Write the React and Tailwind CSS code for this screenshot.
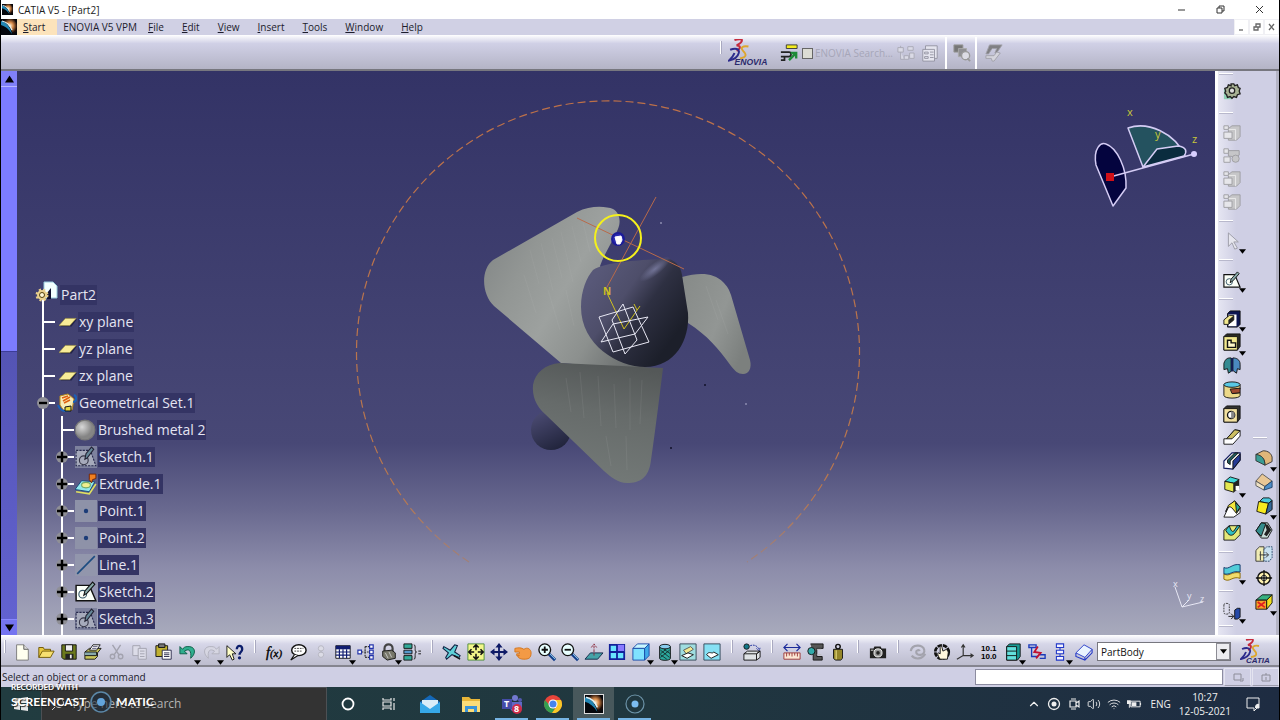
import React from 'react';
import clsx from 'clsx';
import { ChevronUp, Wifi, Volume2 } from 'lucide-react';

const K = '#111';

// All command icons are drawn on a 20x20 grid
const ICONS = {
  new: <><path d="M4 2h8l5 5v12H4z" fill="#fffff0" stroke="#777" /><path d="M12 2v5h5" fill="#ddd" stroke="#555" /></>,
  open: <><path d="M2 16V5h5l1 2h7v3" fill="#e8c840" stroke="#6b5400" /><path d="M2 16l4-7h13l-4 7z" fill="#f7e070" stroke="#6b5400" /></>,
  save: <><path d="M2 2h16v16H4l-2-2z" fill="#6c7a1c" stroke={K} /><path d="M6 2h8v7H6z" fill="#eee" stroke={K} /><path d="M6 12h9v6H6z" fill="#222" /><path d="M11 13h2v4h-2z" fill="#eee" /></>,
  print: <><path d="M1 10l5-4h13l-4 5v4l-3 3H1z" fill="#c9c65a" stroke={K} /><path d="M6 8l4-6h8l-4 6z" fill="#fff" stroke={K} /><path d="M1 10h13v4H1" fill="#8aa" stroke={K} /><path d="M10 4h5M9 6h5" stroke="#557" /></>,
  cut: <g fill="none" stroke="#a2a2ae" strokeWidth="1.5"><path d="M5 2l7 11M14 2L7 13" /><circle cx="5" cy="15" r="2.5" /><circle cx="14" cy="15" r="2.5" /></g>,
  copy: <g fill="#dcdce8" stroke="#a2a2ae"><path d="M2 3h8v11H2z" /><path d="M8 6h9v12H8z" /><path d="M10 9h5M10 12h5M10 15h5" /></g>,
  paste: <><path d="M1 3h13v12H1z" fill="#c0b030" stroke={K} /><path d="M4 1h7v4H4z" fill="#777" stroke={K} /><path d="M8 8h10v10H8z" fill="#fff" stroke="#224" /><path d="M10 11h6M10 13h6M10 15h6" stroke="#224" /></>,
  undo: <path d="M1 4v8h8L6 9c5-3 8-1 7 8 7-6 5-14-4-13-2 0-4 1-5 3z" fill="#2fae8e" stroke="#0a5a44" />,
  redo: <path d="M19 4v8h-8l3-3c-5-3-8-1-7 8C0 11 2 3 11 4c2 0 4 1 5 3z" fill="#d6d6e2" stroke="#b0b0bc" />,
  whatsThis: <><path d="M1 3v13l3-3 3 6 2-1-2-6h4z" fill="#ffffc8" stroke={K} /><path d="M12 7c0-5 6-5 6 0 0 3-3 3-3 6" fill="none" stroke="#0b1d6b" strokeWidth="2.6" /><circle cx="15" cy="16.5" r="1.8" fill="#0b1d6b" /></>,
  formula: <text x="0" y="15" fontSize="16" fontStyle="italic" fontFamily="Liberation Serif, serif" fill="#000" stroke="#000" strokeWidth="0.4">f<tspan fontSize="12">(x)</tspan></text>,
  comment: <><ellipse cx="11" cy="8" rx="8" ry="6" fill="#fff" stroke={K} strokeWidth="1.6" /><path d="M6 13l-4 6 8-5" fill="#fff" stroke={K} strokeWidth="1.3" /><path d="M6 6h10M6 9h9" stroke="#333" strokeDasharray="2 1" /></>,
  lamp: <g fill="#dcdce6" stroke="#b4b4c0"><circle cx="10" cy="6" r="3" /><circle cx="10" cy="13" r="3" /><path d="M10 8v3" /></g>,
  table: <><path d="M2 3h16v14H2z" fill="#fff" stroke={K} /><path d="M2 3h16v4H2z" fill="#101c70" /><path d="M2 10h16M2 13.5h16M6 7v10M10 7v10M14 7v10" stroke="#101c70" strokeWidth="1.3" /></>,
  relations: <g fill="#fff" stroke="#2233aa" strokeWidth="1.3"><path d="M5 10h9M9 4v12M9 4h5M9 16h5" stroke="#333" strokeDasharray="2 1" /><path d="M1 8h4v4H1zM14 2h4v4h-4zM14 8h4v4h-4zM14 14h4v4h-4z" /></g>,
  lock: <><path d="M5 10V6c0-6 9-6 9 0v4" fill="none" stroke="#444" strokeWidth="2.4" /><path d="M3 9l10-1 4 3v6l-9 2-5-4z" fill="#77776a" stroke={K} /><path d="M6 11l3 6M10 10l3 6" stroke="#ccc" /></>,
  equivalent: <><path d="M1 1h9v5H1z" fill="#3a9" stroke={K} /><path d="M1 8h9v4H1z" fill="#59c" stroke={K} /><path d="M1 14h9v5H1z" fill="#3a9" stroke={K} /><path d="M12 2c3 0 0 8 3 8-3 0 0 8-3 8M17 9h3M17 12h3" fill="none" stroke={K} /></>,
  fly: <><path d="M1 4l7 4 5-6 3 1-3 7 6 4-1 2-8-3-6 5-1-2 3-5-6-5z" fill="#5fd0d8" stroke="#124" strokeWidth="1.2" /><path d="M12 14l7 4" stroke={K} strokeWidth="1.5" /></>,
  fitAll: <><path d="M1 1h18v18H1z" fill="#f3f78a" stroke="#4a8a3a" /><path d="M10 2v6M10 12v6M2 10h6M12 10h6M7 5l3-3 3 3M7 15l3 3 3-3M5 7l-3 3 3 3M15 7l3 3-3 3" fill="none" stroke={K} strokeWidth="1.7" /></>,
  pan: <><path d="M10 2v16M2 10h16" stroke="#0e1a66" strokeWidth="2" /><path d="M10 0l4 5H6zM10 20l4-5H6zM0 10l5-4v8zM20 10l-5-4v8z" fill="#0e1a66" /></>,
  rotate: <path d="M1 6c4-1 7-1 10 1 4-3 8 0 8 4 0 6-3 7-8 7-3 0-6-1-7-3l2-1H3v-2h3v-2H1z" fill="#f39a45" stroke="#d3741c" />,
  zoomIn: <><path d="M12 12l7 7" stroke="#123c8a" strokeWidth="3.4" /><path d="M13 12l6 6" stroke="#9fe0f4" /><circle cx="7.5" cy="7.5" r="6.5" fill="#e8ffff" stroke={K} strokeWidth="1.5" /><path d="M4 7.5h7M7.5 4v7" stroke={K} strokeWidth="2" /></>,
  zoomOut: <><path d="M12 12l7 7" stroke="#123c8a" strokeWidth="3.4" /><path d="M13 12l6 6" stroke="#9fe0f4" /><circle cx="7.5" cy="7.5" r="6.5" fill="#e8ffff" stroke={K} strokeWidth="1.5" /><path d="M4 7.5h7" stroke={K} strokeWidth="2" /></>,
  normal: <><path d="M0 18l6-7h14l-6 7z" fill="#45a3a8" stroke="#124" /><path d="M10 14V3M7 5l3-4 3 4" fill="none" stroke="#823" strokeDasharray="3 1" /></>,
  multiView: <><path d="M2 2h16v16H2z" fill="#69e4ff" stroke="#12209a" strokeWidth="2" /><path d="M10 2h8v8h-8z" fill="#8a7aff" /><path d="M10 2v16M2 10h16" stroke="#12209a" strokeWidth="2" /></>,
  isoView: <><path d="M1 6l5-5h13l-5 5z" fill="#c8f6ff" stroke="#1848a8" /><path d="M1 6h13v13H1z" fill="#7fe2ff" stroke="#1848a8" /><path d="M14 6l5-5v13l-5 5z" fill="#3fa8e8" stroke="#1848a8" /></>,
  shading: <><path d="M4 4v13c0 3 12 3 12 0V4" fill="#2ba89c" stroke={K} /><ellipse cx="10" cy="4" rx="6" ry="2.5" fill="#8ce" stroke={K} /><path d="M5 8l10 8M5 13l7 5M9 7l7 5M15 8L5 16M11 7l-6 5" stroke={K} strokeWidth="0.8" /></>,
  hideShow: <><path d="M1 1h18v18H1z" fill="#9fdde0" stroke="#345" /><path d="M5 8l8-4 3 3-8 5z" fill="#f0e890" stroke="#555" /><path d="M3 14l7-3 6 2-7 4z" fill="#fff" stroke={K} /></>,
  swapSpace: <><path d="M1 1h18v18H1z" fill="#86e0f4" stroke="#345" /><path d="M4 13c3-5 6 0 8-3l5 3-8 4z" fill="#fff" stroke={K} /></>,
  animate: <><circle cx="4" cy="4" r="3" fill="#178" stroke={K} /><path d="M8 3c5-2 9 1 10 5M15 6l3 3 1-4" fill="none" stroke="#1a2a9a" strokeDasharray="2 1" /><path d="M1 12l4-3h14l-4 3v7H1zM1 12h14l4-3v7l-4 3" fill="#dfe3e6" stroke={K} /></>,
  measure: <><path d="M1 5h18M5 1L1 5l4 4M15 1l4 4-4 4" fill="none" stroke="#1a2a9a" strokeWidth="1.3" /><path d="M1 11h18v7H1z" fill="#fbe7d4" stroke="#933" /><path d="M4 11v4M7 11v3M10 11v4M13 11v3M16 11v4" stroke="#933" /></>,
  measureItem: <><path d="M5 1h14v5h-7v9h6v4H8v-6" fill="#555" stroke={K} /><circle cx="6" cy="9" r="4" fill="#3aa" stroke={K} /><path d="M12 7h5M12 13h5" stroke="#bbb" /></>,
  inertia: <><circle cx="10" cy="4" r="2.5" fill="none" stroke={K} strokeWidth="1.6" /><path d="M5 7h10v10l-2 2H7l-2-2z" fill="#94862a" stroke={K} /><path d="M8 8v10" stroke="#d8cc70" strokeWidth="1.5" /></>,
  camera: <><path d="M1 6h4l1-2h7l1 2h5v11H1z" fill="#222" /><circle cx="10" cy="11" r="4.5" fill="#999" stroke="#fff" /><circle cx="10" cy="11" r="2" fill="#222" /><path d="M2 8h3" stroke="#eee" /></>,
  update: <g fill="none" stroke="#a3a3ad" strokeWidth="2.4"><path d="M2 9c1-8 14-8 15-1 1 6-9 7-9 2 0-2 3-3 4-1" /><path d="M3 14c4 5 12 4 15-2" /></g>,
  manual: <><circle cx="10" cy="10" r="7.5" fill="none" stroke={K} strokeWidth="3" strokeDasharray="5 1" /><path d="M8 18c-2-3-4-7-2-7l2 1V5c1-2 2-1 2 0l1 4 4-2 2 3-1 8z" fill="#fff7dc" stroke={K} /></>,
  axisSystem: <path d="M8 2v12h11M8 14l-7 4M6 5l2-3 2 3M16 12l3 2-3 2" fill="none" stroke="#333" strokeWidth="1.3" />,
  meanDims: <text fontSize="9" fontWeight="bold" fontFamily="Liberation Sans, Arial, sans-serif"><tspan x="1" y="9">10.1</tspan><tspan x="1" y="18">10.0</tspan></text>,
  table3d: <><path d="M3 4l3-3h12v14l-3 4H3z" fill="#189a94" stroke={K} /><path d="M3 4h11v15H3zM3 9h11M3 14h11" fill="#63e0dc" stroke={K} /></>,
  swapBody: <><path d="M1 2h8v3H1zM4 5v10h7M13 13h6v4h-6" fill="none" stroke="#1a3aba" strokeWidth="1.5" /><path d="M11 4l-4 6 7 1-5 6" fill="none" stroke="#c01030" strokeWidth="2" /></>,
  stack: <g fill="#f2f2ff" stroke="#2238c8" strokeWidth="1.2"><path d="M6 1h8v4H6zM6 8h8v4H6zM6 15h8v4H6zM10 5v3M10 12v3" /></g>,
  body: <><path d="M1 11L10 2l9 5-8 9z" fill="#eaf4ff" stroke="#2238c8" /><path d="M1 11v4l10 4 8-8V7M11 16v3" fill="none" stroke="#2238c8" strokeWidth="1.2" /></>,
  gear: <><path d="M1 18V7h9v11z" fill="#8fd0b4" /><path d="M9 1h3l1 2 3-1 1 3 2 1-1 3 1 3-3 1-1 3-3-1-2 2-2-2-3 1-1-3-2-2 1-2-1-3 3-1 1-3 3 1z" fill="#a8b294" stroke="#222" strokeWidth="1.5" /><circle cx="10" cy="8.5" r="3" fill="#ddd" stroke="#222" strokeWidth="1.4" /></>,
  boolCube: <g fill="#c6c6c8" stroke="#9c9ca0"><path d="M6 5l4-3h9v12l-4 4H6z" /><path d="M6 6h8v12" fill="none" stroke="#eee" /><path d="M1 2h5v4H1zM1 9h9v7H1z" fill="#e6e6ea" /></g>,
  boolCubeCyl: <g fill="#c6c6c8" stroke="#9c9ca0"><path d="M6 4h12v5l-4 2-8-1z" /><circle cx="14" cy="13" r="4" /><path d="M1 2h5v5H1zM1 11h7v6H1z" fill="#e6e6ea" /></g>,
  select: <path d="M6 1v15l4-4 3 7 3-1-4-7h5z" fill="#e6e6ee" stroke="#9a9aa4" />,
  sketch: <><path d="M1 4h12l6 14H1z" fill="#fbfff8" stroke={K} strokeWidth="1.3" /><circle cx="7" cy="12" r="3.5" fill="none" stroke="#356" /><path d="M8 13l1-4 7-8 2 2-7 8z" fill="#8aa" stroke={K} /></>,
  pad: <><path d="M5 4l3-3h11v15l-3 3H5z" fill="#0c1550" stroke={K} /><path d="M6 5h9v13H6z" fill="#fff" /><path d="M1 11l6-5h5v5l-6 5H1z" fill="#f2e88e" stroke={K} /><path d="M6 11l6-5v5l-6 5z" fill="#222" /></>,
  pocket: <><path d="M1 4l3-3h15v14l-3 4H1z" fill="#2a2a24" stroke={K} /><path d="M1 4h15v15H1z" fill="#f2e88e" stroke={K} /><path d="M5 8h4v3h5v5H5z" fill="#fff8c8" stroke={K} strokeWidth="1.6" /></>,
  shaft: <><path d="M1 7c2-6 5-6 8-6v15l-3 2-1-5-4 1z" fill="#348a92" stroke={K} /><path d="M11 1c4 0 8 2 8 7v6l-3-1-1 5-4-3z" fill="#4a8ac0" stroke={K} /><path d="M10 1v15" stroke="#0c1550" strokeWidth="2" /></>,
  groove: <><path d="M1 4v12c0 4 18 4 18 0v-3l-8 1v-4l8-1V4" fill="#ecd888" stroke={K} /><path d="M8 9l11-1v5l-9 1z" fill="#a04a30" stroke={K} /><ellipse cx="10" cy="4" rx="9" ry="3" fill="#59c8e4" stroke={K} /></>,
  hole: <><path d="M1 4l3-3h15v14l-3 4H1z" fill="#333" stroke={K} /><path d="M1 4h15v15H1z" fill="#f2e0a0" stroke={K} /><circle cx="9" cy="11" r="4" fill="#fff" stroke={K} strokeWidth="1.5" /><path d="M9 7a4 4 0 010 8z" fill="#888" /></>,
  rib: <><path d="M1 18V12h3L13 2l6 1v6l-8 9z" fill="#fff" stroke={K} /><path d="M4 12L13 2l6 1-9 9z" fill="#cdbf62" stroke={K} /></>,
  slot: <><path d="M1 18v-8l9-9h9v8l-8 10z" fill="#fff" stroke="#101a5c" strokeWidth="1.3" /><path d="M5 9l8-8h4l-9 9v4L5 12z" fill="#205a5c" stroke={K} /><path d="M11 10l8-8v7l-8 10z" fill="#253a94" stroke={K} /></>,
  solid: <><path d="M2 6l6-5 10 3-6 4z" fill="#3fd8d8" stroke={K} /><path d="M2 6l10 2v10l-10-3z" fill="#e4e850" stroke={K} /><path d="M12 8l6-4v10l-6 4z" fill="#222" /><path d="M14 11h4v5h-4z" fill="#fff" /></>,
  loft: <><path d="M1 19L7 6l6-5 6 7v6l-7 5z" fill="#fff" stroke={K} /><path d="M3 13c2-6 5-7 8-3l4 5 4-6-6-8-7 5z" fill="#f4e83c" stroke={K} /><path d="M14 3l5 5-4 6z" fill="#2aa898" stroke={K} /></>,
  removedLoft: <><path d="M1 19V8l6-5h12v10l-6 6z" fill="#e4e878" stroke={K} /><path d="M3 8l4-5c2 6 3 7 5 6l4-6h3l-5 7c-4 6-8 4-11-2z" fill="#30c0c4" stroke={K} /></>,
  surface: <><path d="M1 12c6 4 8-3 18-1v6c-9-3-11 5-18 1z" fill="#f2dc6c" stroke="#876400" /><path d="M1 5c6 3 9-5 18-3v8c-9-2-11 4-18 2z" fill="#52ccd8" stroke="#136" /></>,
  translate: <><path d="M1 3c0-2 6-2 6 0v9c0 2-6 2-6 0z" fill="none" stroke="#333" strokeDasharray="2 1" /><path d="M6 16h6M9 13l3 3-3 3" fill="none" stroke={K} /><path d="M13 9l3-2h3v10l-3 2h-3z" fill="#2448a8" stroke={K} /></>,
  fillet: <><path d="M1 6l8-4c6 0 9 3 10 7v5l-8 4c0-7-3-10-10-12z" fill="#dfb679" stroke="#333" /><path d="M1 6c7 1 10 5 10 12l-10-5z" fill="#3a9c94" stroke="#333" /></>,
  chamfer: <><path d="M1 9l7-8 11 8-8 6z" fill="#e8c795" stroke="#555" /><path d="M1 9v5l9 5 1-4z" fill="#efe2c4" stroke="#555" /><path d="M11 15l8-6v7l-9 3z" fill="#4d8ec8" stroke="#246" /></>,
  draft: <><path d="M5 5l4-4h7l3 3-4 3z" fill="#4ac8dc" stroke={K} /><path d="M4 5l11 2-3 12-10-3z" fill="#f6ea20" stroke={K} /><path d="M15 7l4-3v10l-7 5z" fill="#356a9a" stroke={K} /></>,
  shell: <><path d="M1 11l6-9h7l5 8-5 9H7z" fill="#c8dcd8" stroke={K} /><path d="M1 11l6-9 5 1-5 14z" fill="#348c8c" stroke={K} /><path d="M11 4h3l4 6-5 7-3-2 3-5z" fill="#222" /></>,
  thickness: <><path d="M1 6l4-4h5v16H1z" fill="#f0ecb4" stroke="#333" /><path d="M10 5l3-3h6v12l-3 4h-6z" fill="#c8e0f0" stroke="#246" strokeDasharray="2 1" /><path d="M5 11h10M6 7v10M12 8l3 3-3 3" fill="none" stroke="#333" /></>,
  thread: <><circle cx="10" cy="10" r="7" fill="#fff2b0" stroke={K} strokeWidth="1.6" /><circle cx="10" cy="10" r="3" fill="#ffe" stroke={K} /><path d="M10 1v18M1 10h18" stroke={K} strokeWidth="1.4" /></>,
  replace: <><path d="M1 8l7-6h11l-6 6z" fill="#38b080" stroke={K} /><path d="M1 8h12v10H1z" fill="#f8a428" stroke={K} /><path d="M13 8l6-6v9l-6 7z" fill="#f0e020" stroke={K} /><path d="M3 10l8 6M11 10l-8 6" stroke="#e02020" strokeWidth="2" /></>,
  locate: <><path d="M7 1h12v4H7z" fill="#f4ec20" stroke="#333" /><path d="M1 9h9c3 0 3 5 0 5H5M1 14h4v4H1" fill="none" stroke="#222" strokeWidth="1.9" /><path d="M10 18l7-7M12 10h6v6" fill="none" stroke="#1f8a38" strokeWidth="2.6" /></>,
  ghostTree: <g fill="#dadae6" stroke="#a8a8b4"><path d="M1 4h6v5H1zM4 9v8h4M8 13h5v4H8zM12 3h6v4h-6zM14 10h5v6h-5zM4 2v2" /></g>,
  ghostForm: <g fill="#e4e4ee" stroke="#9292a0"><path d="M5 2h13v14H5z" /><path d="M2 6h13v13H2zM4 9h4v2H4zM4 14h4v2H4zM10 9h4M10 12h4M10 15h4" /></g>,
  ghostFind: <><path d="M1 1h10v8H1z" fill="#777" stroke="#999" /><path d="M6 5h9v9H6z" fill="#909094" stroke="#aaa" /><circle cx="14" cy="13" r="4.5" fill="#dcdce4" stroke="#999" strokeWidth="1.5" /><path d="M16 16l3 3" stroke="#999" strokeWidth="2" /></>,
  ghostSend: <><path d="M5 1h14l-6 9h-2l2-5H8l-4 6H1z" fill="#808084" stroke="#a0a0a8" /><path d="M1 13h9l3-4 4 1-7 9H8l-1-3H1z" fill="#d4d4dc" stroke="#a0a0a8" /></>,
  geoSet: <><path d="M3 3l8-2 6 5-2 11-8 1L3 12z" fill="#f8ecb8" stroke="#b88a20" /><path d="M5 5l6-2M6 8l7-4M7 10l6-3" stroke="#e06010" strokeWidth="1.6" /><path d="M1 12c2 6 6 7 12 5M16 9c4 0 4-6 1-7" fill="none" stroke="#1a60b8" strokeWidth="2" /><path d="M8 14l6-1v5H8z" fill="#e8d840" stroke={K} /></>,
  ball: <circle cx="10" cy="10" r="9" fill="url(#ballFill)" stroke="#777" />,
  plane: <><path d="M2 15l6-8h12l-6 8z" fill="#222248" /><path d="M0 14l7-8h12l-7 8z" fill="#f8ec98" stroke="#a89838" strokeWidth="0.6" /></>,
  hiddenSketch: <><path d="M0 0h20v20H0z" fill="#7e829e" /><path d="M1 4h13l5 14H1z" fill="#a6aabb" stroke="#26284c" strokeDasharray="2 1" /><circle cx="8" cy="13" r="4" fill="none" stroke="#334" /><path d="M9 12l1-5 5-6 2 2-6 8z" fill="#689" stroke="#223" /></>,
  extrude: <><path d="M0 15l6-8 12 1-5 9z" fill="#8fe8ec" stroke="#147" strokeWidth="0.8" /><path d="M1 17l12 2 6-9" fill="none" stroke="#e0e060" strokeWidth="1.5" /><ellipse cx="10" cy="11" rx="4" ry="2.5" fill="#f0f090" stroke="#7a6" /><path d="M13 6V1h6v4l-3 1-1 3z" fill="#f08020" stroke="#702000" strokeWidth="0.8" /></>,
  hiddenPoint: <><path d="M0 0h20v20H0z" fill="#8e92a8" /><circle cx="10" cy="10" r="2" fill="#1c3c78" /></>,
  hiddenLine: <><path d="M0 0h20v20H0z" fill="#9296ac" /><path d="M2 18L18 2" stroke="#1c4c80" strokeWidth="1.5" /></>,
};

const FILE_TOOLS = [
  ['New', 'new'], ['Open', 'open'], ['Save', 'save'], ['Quick Print', 'print'], ['Cut', 'cut'],
  ['Copy', 'copy'], ['Paste', 'paste'], ['Undo', 'undo', true], ['Redo', 'redo', true], ["What's This?", 'whatsThis'],
];
const KNOWLEDGE_TOOLS = [
  ['Formula', 'formula'], ['Comment', 'comment'], ['Check', 'lamp'], ['Design Table', 'table', true],
  ['Relations', 'relations'], ['Lock', 'lock', true], ['Equivalent Dimensions', 'equivalent'],
];
const VIEW_TOOLS = [
  ['Fly Mode', 'fly'], ['Fit All In', 'fitAll'], ['Pan', 'pan'], ['Rotate', 'rotate'], ['Zoom In', 'zoomIn'],
  ['Zoom Out', 'zoomOut'], ['Normal View', 'normal'], ['Multi View', 'multiView'], ['Isometric View', 'isoView', true],
  ['Shading', 'shading', true], ['Hide/Show', 'hideShow'], ['Swap Visible Space', 'swapSpace'],
];
const MEASURE_TOOLS = [['Measure Between', 'measure'], ['Measure Item', 'measureItem'], ['Measure Inertia', 'inertia']];
const PART_TOOLS = [
  ['Update All', 'update'], ['Manual Update', 'manual'], ['Axis System', 'axisSystem'], ['Mean Dimensions', 'meanDims'],
  ['Create Datum', 'table3d', true], ['Only Current Body', 'swapBody'], ['Catalog', 'stack', true], ['Insert Body', 'body'],
];
const BOOLEAN_TOOLS = [['Assemble', 'boolCube'], ['Add', 'boolCubeCyl'], ['Remove', 'boolCube'], ['Intersect', 'boolCube']];
const SOLID_TOOLS = [
  ['Pad', 'pad', true], ['Pocket', 'pocket', true], ['Shaft', 'shaft'], ['Groove', 'groove'], ['Hole', 'hole'],
  ['Rib', 'rib'], ['Slot', 'slot'], ['Solid Combine', 'solid', true], ['Multi-sections Solid', 'loft'],
  ['Removed Multi-sections Solid', 'removedLoft'],
];
const DRESS_TOOLS = [
  ['Edge Fillet', 'fillet', true], ['Chamfer', 'chamfer'], ['Draft Angle', 'draft', true], ['Shell', 'shell'],
  ['Thickness', 'thickness'], ['Thread/Tap', 'thread'], ['Replace Face', 'replace', true],
];

const PLANES = ['xy plane', 'yz plane', 'zx plane'];
const FEATURES = [
  ['Sketch.1', 'hiddenSketch'], ['Extrude.1', 'extrude'], ['Point.1', 'hiddenPoint'], ['Point.2', 'hiddenPoint'],
  ['Line.1', 'hiddenLine'], ['Sketch.2', 'sketch'], ['Sketch.3', 'hiddenSketch'],
];

function Icon({ name, className = 'w-5 h-5' }) {
  return <svg viewBox="0 0 20 20" className={clsx('shrink-0', className)} aria-hidden="true">{ICONS[name]}</svg>;
}

function Tool({ label, icon, more, className = 'w-[22px] h-[22px]' }) {
  return (
    <button type="button" aria-label={label} title={label} className={clsx('relative flex items-center justify-center shrink-0', className)}>
      <Icon name={icon} className="w-[18px] h-[18px] overflow-visible" />
      {more && (
        <svg viewBox="0 0 6 4" className="absolute -right-[2px] -bottom-[2px] w-[7px] h-[5px]" aria-hidden="true"><path d="M0 0h6L3 4z" fill="#000" /></svg>
      )}
    </button>
  );
}

function ToolGroup({ tools, className }) {
  return (
    <div className={clsx('flex justify-between shrink-0', className)}>
      {tools.map(([label, icon, more]) => <Tool key={label} label={label} icon={icon} more={more} />)}
    </div>
  );
}

function Grip() {
  return (
    <div className="w-[18px] h-6 flex justify-center shrink-0">
      <div className="w-[2px] h-[13px] bg-white border-r border-[#a9a9c0]" />
    </div>
  );
}

// Short white bar between groups of the vertical toolbar
function Bar({ className = 'h-4 pt-[7px]' }) {
  return <div className={className}><div className="w-[14px] h-[2px] bg-white border-b border-[#b8b8cc]" /></div>;
}

function CatiaMark({ className }) {
  return (
    <svg viewBox="0 0 16 16" className={clsx('shrink-0', className)} aria-hidden="true">
      <path d="M0 0h16v16H0z" fill="#05070c" />
      <path d="M4 0h9l3 5v7l-4 3C10 9 7 5 2 2z" fill="url(#markGlow)" />
      <path d="M0 2c5 1 9 5 11 13C8 10 4 7 0 6z" fill="#2286b4" />
      <path d="M1 2c5 1 8 4 10 9" stroke="#dff4fa" strokeWidth="1.2" fill="none" />
    </svg>
  );
}

function DassaultLogo({ label, className }) {
  return (
    <svg viewBox="0 0 39 26" className={clsx('shrink-0', className)} role="img" aria-label={label}>
      <g fill="none" strokeWidth="1.8">
        <path d="M6 1c3-1 7-1 7 0 0 2-3 4-5 5 4 0 4 3 0 5" stroke="#c42a3c" />
        <path d="M2 10c5-2 9-1 8 3-1 4-4 6-9 7 2-2 4-4 5-7" stroke="#2c2a8c" />
        <path d="M19 7c-5-1-8 1-5 4s4 6-3 7" stroke="#dda62c" />
      </g>
      <text x="6" y="24" fontSize="8" fontWeight="bold" fontStyle="italic" fontFamily="Liberation Sans, Arial, sans-serif" fill="#2c2a6c">{label}</text>
    </svg>
  );
}

function TitleBar() {
  return (
    <header className="h-[19px] shrink-0 flex items-center bg-white text-[#222]">
      <CatiaMark className="w-[11px] h-[11px] ml-[1px]" />
      <h1 className="ml-[5px] text-[10px] leading-4">CATIA V5 - [Part2]</h1>
      <div className="ml-auto flex">
        {[['Minimize', 'M1 5h7'], ['Restore', 'M1 3h5v5H1zM3 3V1h5v5H6'], ['Close', 'M1 1l7 7M8 1L1 8']].map(([label, d]) => (
          <button key={label} type="button" aria-label={label} className="w-[39px] h-[19px] flex items-center justify-center">
            <svg viewBox="0 0 9 9" className="w-[9px] h-[9px]"><path d={d} fill="none" stroke="#333" /></svg>
          </button>
        ))}
      </div>
    </header>
  );
}

function MenuBar() {
  return (
    <nav className="h-4 shrink-0 flex items-stretch bg-[#d0d0e4] text-[10px] leading-4 text-[#1c1c2c]">
      <CatiaMark className="w-4 h-4" />
      <button type="button" className="pl-[6px] pr-[12px] bg-[#fce3bb]"><u>S</u>tart</button>
      <button type="button" className="pl-[6px] pr-[2px]">ENOVIA V5 VPM</button>
      {['File', 'Edit', 'View', 'Insert', 'Tools', 'Window', 'Help'].map((m) => (
        <button key={m} type="button" className="px-[9px]"><u>{m[0]}</u>{m.slice(1)}</button>
      ))}
      <div className="ml-auto flex bg-white">
        {[['Minimize part', 'M1 7h4'], ['Restore part', 'M1 4h4v3H1zM3 4V1h4v3H5'], ['Close part', 'M1 1l5 6M6 1L1 7']].map(([label, d]) => (
          <button key={label} type="button" aria-label={label} className="w-[15px] flex items-center justify-center border border-[#f0f0f4]">
            <svg viewBox="0 0 8 8" className="w-2 h-2"><path d={d} fill="none" stroke="#666" strokeWidth="1.3" /></svg>
          </button>
        ))}
      </div>
    </nav>
  );
}

function EnoviaBar() {
  return (
    <div className="h-[36px] shrink-0 flex items-center pt-[2px] bg-linear-to-b from-white via-[#d0d0e6] via-25% to-[#b4b4c6] border-b-2 border-[#77777f]">
      <div className="flex items-center ml-[55%]">
        <div className="w-6 h-6 pl-4 shrink-0"><div className="w-[2px] h-[13px] bg-white border-r border-[#a9a9c0]" /></div>
        <DassaultLogo label="ENOVIA" className="w-[42px] h-[28px]" />
        <Tool label="Locate" icon="locate" className="ml-2 w-[22px] h-[22px]" />
        <label className="ml-[2px] flex items-center gap-[2px] text-[10px] leading-4 text-[#a6a6b8]">
          <input type="checkbox" className="appearance-none w-[11px] h-[11px] bg-[#dcdcd4] border border-[#666]" />
          ENOVIA Search...
        </label>
        <Tool label="Tree search" icon="ghostTree" className="ml-[2px] w-[22px] h-[22px]" />
        <Tool label="Form" icon="ghostForm" className="ml-[2px] w-[22px] h-[22px]" />
        <div className="mx-1 w-[2px] h-[32px] bg-white" />
        <Tool label="Find" icon="ghostFind" />
        <div className="mx-[2px] w-[2px] h-[32px] bg-white" />
        <Tool label="Send" icon="ghostSend" className="ml-1 w-[22px] h-[22px]" />
      </div>
    </div>
  );
}

function ScrollBar() {
  return (
    <div className="w-4 shrink-0 flex flex-col bg-[#5c5cc0]">
      <button type="button" aria-label="Scroll up" className="h-4 bg-[#8080f8] border-b border-[#b8b8ff] flex items-center justify-center">
        <svg viewBox="0 0 10 8" className="w-[9px] h-2"><path d="M5 0l5 8H0z" fill="#000" /></svg>
      </button>
      <div className="h-[47%] bg-[#7c7cff] border-b border-[#3c3c98]" />
      <div className="flex-1 bg-linear-to-b from-[#5454b4] to-[#6262d0]" />
      <button type="button" aria-label="Scroll down" className="h-4 bg-[#7474f0] border-t border-[#8888ff] flex items-center justify-center">
        <svg viewBox="0 0 10 8" className="w-[9px] h-2"><path d="M0 0h10L5 8z" fill="#000" /></svg>
      </button>
    </div>
  );
}

function TreeLabel({ children }) {
  return <span className="ml-[1px] px-[1px] h-5 leading-5 bg-[#343464] whitespace-nowrap">{children}</span>;
}

function Knob({ open, className }) {
  return (
    <button type="button" aria-label={open ? 'Collapse' : 'Expand'} className={clsx('shrink-0 w-3 h-3', className)}>
      <svg viewBox="0 0 12 12" className="w-3 h-3">
        <circle cx="6" cy="6" r="6" fill="#8f8f96" />
        <path d={open ? 'M2 6h8' : 'M1 6h10M6 1v10'} stroke="#000" strokeWidth="2.4" />
      </svg>
    </button>
  );
}

function SpecTree() {
  return (
    <div className="absolute left-[18px] top-[210px] bottom-0 overflow-hidden text-[14px] text-[#e4e4f2]">
      <div className="flex items-center h-[27px]">
        <svg viewBox="0 0 24 27" className="w-6 h-[27px]" aria-hidden="true">
          <path d="M9 1h9l4 4v12H9z" fill="#f4ffff" stroke="#9cd" />
          <path d="M12 12l4-5v11h-4z" fill="#101030" />
          <path d="M8 16v11" stroke="#fff" strokeWidth="2" />
          <circle cx="7" cy="14" r="5" fill="#e8cf8c" stroke="#e8cf8c" strokeWidth="3" strokeDasharray="2 2" />
          <circle cx="7" cy="14" r="2.5" fill="#fff8d8" stroke="#54400c" />
        </svg>
        <TreeLabel>Part2</TreeLabel>
      </div>
      <ul className="ml-[7px] border-l-2 border-white">
        {PLANES.map((p) => (
          <li key={p} className="flex items-center h-[27px]">
            <span className="w-[11px] h-[2px] bg-white" />
            <Icon name="plane" className="w-[18px] h-[18px] ml-1" />
            <TreeLabel>{p}</TreeLabel>
          </li>
        ))}
        <li>
          <div className="flex items-center h-[27px]">
            <Knob open className="-ml-[7px]" />
            <span className="w-[6px] h-[2px] bg-white" />
            <Icon name="geoSet" className="w-5 h-5 ml-[2px]" />
            <TreeLabel>Geometrical Set.1</TreeLabel>
          </div>
          <ul className="ml-[17px] border-l-2 border-white pb-3">
            <li className="flex items-center h-[27px]">
              <span className="w-[11px] h-[2px] bg-white" />
              <Icon name="ball" className="w-[22px] h-[22px]" />
              <TreeLabel>Brushed metal 2</TreeLabel>
            </li>
            {FEATURES.map(([name, icon]) => (
              <li key={name} className="flex items-center h-[27px]">
                <Knob className="-ml-[7px]" />
                <span className="w-[6px] h-[2px] bg-white" />
                <Icon name={icon} className="w-[22px] h-[22px] ml-[1px]" />
                <TreeLabel>{name}</TreeLabel>
              </li>
            ))}
          </ul>
        </li>
      </ul>
    </div>
  );
}

function Model() {
  return (
    <svg viewBox="17 71 1198 564" className="absolute inset-0 w-full h-full" role="img" aria-label="Propeller model">
      <defs>
        <linearGradient id="bladeA" x1="0" y1="0.2" x2="1" y2="0.8">
          <stop offset="0" stopColor="#828686" /><stop offset="0.25" stopColor="#929694" /><stop offset="0.5" stopColor="#9da19f" /><stop offset="0.75" stopColor="#8c908e" /><stop offset="1" stopColor="#6a6e6e" />
        </linearGradient>
        <linearGradient id="bladeB" x1="0.6" y1="0" x2="0.4" y2="1">
          <stop offset="0" stopColor="#545858" /><stop offset="0.4" stopColor="#666b6a" /><stop offset="1" stopColor="#747a78" />
        </linearGradient>
        <linearGradient id="bladeC" x1="0" y1="0" x2="1" y2="0.6">
          <stop offset="0" stopColor="#868a88" /><stop offset="0.6" stopColor="#929694" /><stop offset="1" stopColor="#7c807e" />
        </linearGradient>
        <linearGradient id="hub" x1="0.1" y1="0.2" x2="0.85" y2="0.75">
          <stop offset="0" stopColor="#585878" /><stop offset="0.35" stopColor="#4e4e6a" /><stop offset="0.6" stopColor="#2e3042" /><stop offset="1" stopColor="#1c1f2a" />
        </linearGradient>
        <radialGradient id="nose"><stop offset="0" stopColor="#8688b0" stopOpacity="0.7" /><stop offset="1" stopColor="#8688b0" stopOpacity="0" /></radialGradient>
        <linearGradient id="knob" x1="0.2" y1="0" x2="0.7" y2="1">
          <stop offset="0" stopColor="#4c4c74" /><stop offset="1" stopColor="#20233a" />
        </linearGradient>
        <linearGradient id="orbit" x1="0" y1="0" x2="0" y2="1">
          <stop offset="0" stopColor="#bd7048" /><stop offset="0.85" stopColor="#b8774e" /><stop offset="1" stopColor="#a08078" />
        </linearGradient>
        <radialGradient id="ballFill" cx="0.35" cy="0.35"><stop offset="0" stopColor="#d8d8d8" /><stop offset="1" stopColor="#858585" /></radialGradient>
        <radialGradient id="markGlow" cx="0.5" cy="0.45"><stop offset="0" stopColor="#fff4d8" /><stop offset="0.45" stopColor="#d88a48" /><stop offset="1" stopColor="#1a0c08" /></radialGradient>
      </defs>

      <path d="M469 562A251.5 251.5 0 1 1 747 562" fill="none" stroke="url(#orbit)" strokeWidth="1.2" strokeDasharray="8 4" />

      <circle cx="551" cy="430" r="20" fill="url(#knob)" />
      <path d="M493 260L577 212C590 205 606 206 613 209C620 213 621 222 618 229C612 243 604 254 600 266L645 370L561 363L494 306C482 295 480 270 493 260Z" fill="url(#bladeA)" />
      <path d="M682 277C700 272 714 273 723 282C727 286 729 289 731 295L750 360C752 368 749 374 743 374C738 374 735 371 731 366C718 348 708 336 688 323Z" fill="url(#bladeC)" />
      <path d="M560 363L663 368C660 392 656 425 651 460C649 478 640 483 627 483C618 483 611 477 604 471L545 414C536 406 532 396 533 385C535 373 545 364 560 363Z" fill="url(#bladeB)" />
      {/* brushed metal grain */}
      <g fill="none" stroke="#c4c8c4" strokeOpacity="0.1">
        <path d="M530 250l9 34M541 243l12 48M552 238l10 40M561 232l12 50M572 226l9 36M583 222l7 30M524 275l12 38M548 290l12 40M566 290l8 36M706 286l12 34M716 300l12 34" />
        <path d="M566 378l5 34M580 372l4 46M598 376l3 50M614 384l2 44M630 378v52M642 380l-2 44M606 436l5 30M626 436l1 34" />
      </g>
      <path d="M593 270C605 262 640 260 660 259C672 256 681 265 682 275L688 313C690 340 675 367 645 367C618 367 581 345 581 307C581 290 587 277 593 270Z" fill="url(#hub)" />
      <ellipse cx="655" cy="269" rx="19" ry="6" transform="rotate(-38 655 269)" fill="url(#nose)" />

      <g fill="none">
        <path d="M656 197L607 287M577 218L684 269" stroke="#b86a4a" />
        <path d="M607 293L624 329L640 306M634 304l3 6" stroke="#cfc020" />
        <g stroke="#e8e8f4">
          <path d="M599 317L633 307L649 342L613 352Z" />
          <path d="M623 304L612 320L625 354L637 340Z" />
          <path d="M648 317L613 324L601 342L635 334Z" />
        </g>
        <circle cx="618" cy="238" r="23" stroke="#f4f01c" strokeWidth="2" />
        <circle cx="618" cy="239" r="6" stroke="#1c1c98" strokeWidth="2" fill="#2a2ab0" />
      </g>
      <path d="M615 237l6-1 1 4-2 4h-3z" fill="#fff" stroke="#fff" />
      <text x="603" y="295" fontSize="10" fontWeight="bold" fill="#cfc020">N</text>
      <g fill="#101028"><circle cx="705" cy="385" r="1" /><circle cx="671" cy="448" r="1" /></g>
      <g fill="#8c8cb0"><circle cx="661" cy="223" r="1" /><circle cx="746" cy="404" r="1" /></g>
    </svg>
  );
}

function Compass() {
  return (
    <svg viewBox="1085 100 120 115" className="absolute right-[10px] top-[29px] w-[120px] h-[115px]" role="img" aria-label="Compass">
      <g stroke="#d4ccf4" strokeWidth="1.5" strokeLinejoin="round">
        <path d="M1143 167L1128 128C1148 121 1175 133 1185 156Z" fill="#24525f" />
        <path d="M1143 167L1157 149L1178 146C1187 147 1187 152 1184 156Z" fill="#0a2c3e" />
        <path d="M1096 165C1093 148 1101 142 1106 144C1117 148 1127 168 1126 188L1113 206Z" fill="#04043e" />
        <path d="M1110 177L1194 154" />
      </g>
      <circle cx="1194" cy="154" r="3" fill="#d8d0ff" />
      <path d="M1106 173h8v8h-8z" fill="#d01018" />
      <g fill="#c8c838" fontSize="11"><text x="1127" y="116">x</text><text x="1155" y="138">y</text><text x="1192" y="143">z</text></g>
    </svg>
  );
}

function AxisTriad() {
  return (
    <svg viewBox="1168 576 42 36" className="absolute right-[5px] bottom-[23px] w-[42px] h-[36px]" aria-hidden="true">
      <path d="M1175 587L1182 607L1203 602M1182 607L1189 600" fill="none" stroke="#e8e8f4" />
      <g fill="#e8e8f4" fontSize="9"><text x="1173" y="587">x</text><text x="1187" y="599">y</text><text x="1200" y="602">z</text></g>
    </svg>
  );
}

function SideTools() {
  return (
    <aside className="w-16 shrink-0 flex justify-between bg-linear-to-r from-[#e6e6f2] to-[#cfcfe4] to-30% border-l-3 border-white pr-[1px] shadow-[inset_-3px_0_0_#b4b4c4]">
      <div className="w-[34px] pl-[1px] flex flex-col">
        <Bar className="h-[9px] pt-[2px]" />
        <Tool label="Settings" icon="gear" className="w-[25px] h-[23px]" />
        <Bar className="h-[18px] pt-[9px]" />
        {BOOLEAN_TOOLS.map(([label, icon]) => <Tool key={label} label={label} icon={icon} className="w-[25px] h-[23px]" />)}
        <Bar />
        <Tool label="Select" icon="select" more className="w-[25px] h-[23px]" />
        <Bar />
        <Tool label="Sketcher" icon="sketch" more className="w-[25px] h-[23px]" />
        <Bar />
        <div className="h-[237px] flex flex-col justify-between">
          {SOLID_TOOLS.map(([label, icon, more]) => <Tool key={label} label={label} icon={icon} more={more} className="w-[25px] h-[23px]" />)}
        </div>
        <Bar />
        <Tool label="Thick Surface" icon="surface" more className="w-[25px] h-[23px]" />
        <Bar />
        <Tool label="Translation" icon="translate" more className="w-[25px] h-[23px]" />
        <Bar className="h-[10px] pt-[3px]" />
      </div>
      <div className="w-[25px] flex flex-col justify-end pb-[21px]">
        <Bar />
        {DRESS_TOOLS.map(([label, icon, more]) => <Tool key={label} label={label} icon={icon} more={more} className="w-[22px] h-6" />)}
      </div>
    </aside>
  );
}

function BottomBar() {
  return (
    <div className="h-8 shrink-0 flex items-center pt-[3px] bg-linear-to-b from-white via-[#d6d6e8] via-30% to-[#bdbdce] border-b-2 border-[#85858f]">
      <div className="w-[10px] h-6 pl-[3px]"><div className="w-[2px] h-[13px] bg-white border-r border-[#a9a9c0]" /></div>
      <ToolGroup tools={FILE_TOOLS} className="w-[235px]" />
      <Grip />
      <ToolGroup tools={KNOWLEDGE_TOOLS} className="w-[159px]" />
      <Grip />
      <ToolGroup tools={VIEW_TOOLS} className="w-[282px]" />
      <Grip />
      <Tool label="Apply Material" icon="animate" />
      <Grip />
      <ToolGroup tools={MEASURE_TOOLS} className="w-[68px]" />
      <Grip />
      <Tool label="Capture" icon="camera" />
      <Grip />
      <ToolGroup tools={PART_TOOLS} className="w-[188px]" />
      <div className="relative ml-[2px] flex-1">
        <select aria-label="Current body" className="appearance-none block w-full h-[19px] pl-[3px] bg-white border border-[#77777f] text-[10px] leading-4 text-[#111]">
          <option>PartBody</option>
        </select>
        <span className="pointer-events-none absolute right-[1px] top-[1px] w-[14px] h-[17px] bg-[#ececf0] border border-[#8c8c94] flex items-center justify-center">
          <svg viewBox="0 0 6 4" className="w-[7px] h-[5px]"><path d="M0 0h6L3 4z" fill="#000" /></svg>
        </span>
      </div>
      <DassaultLogo label="CATIA" className="w-[39px] h-[26px] ml-[9px]" />
    </div>
  );
}

function StatusBar() {
  return (
    <div className="h-5 shrink-0 flex items-center bg-[#cfcfe4] text-[10px] leading-3 text-[#1c1c2c]">
      <p className="pl-[1px]">Select an object or a command</p>
      <input aria-label="Command" className="ml-auto w-[248px] h-4 bg-white border border-[#8c8ca0]" />
      {[['Power input', 'M2 2h7v6H2zM11 6v3h-3'], ['Dialog', 'M2 3h8v6H2zM6 1v2M6 5v3']].map(([label, d]) => (
        <button key={label} type="button" aria-label={label} className="ml-[1px] w-[27px] h-[18px] flex items-center justify-center border border-[#e4e4f0] border-b-[#9c9cac]">
          <svg viewBox="0 0 12 10" className="w-3 h-[10px]"><path d={d} fill="none" stroke="#8c8c98" /></svg>
        </button>
      ))}
    </div>
  );
}

const APPS = [
  ['Cortana', <circle cx="10" cy="10" r="5.5" fill="none" stroke="#fff" strokeWidth="1.8" />],
  ['Task View', <path d="M4 4v2h8V4M4 16v-2h8v2M4 8h8v4H4zM15 4v3M15 9v7" fill="none" stroke="#e8e8e8" strokeWidth="1.2" />],
  ['Mail', <><path d="M0 8l10-7 10 7v11H0z" fill="#1468b8" /><path d="M2 6h16v9H2z" fill="#d8ecf8" /><path d="M0 8l10 7 10-7v11H0z" fill="#36a8e8" /></>],
  ['File Explorer', <><path d="M1 3h7l2 2h9v13H1z" fill="#e8b638" /><path d="M1 7h18v11H1z" fill="#fbdc78" /><path d="M4 18v-6h12v6h-3v-3H7v3z" fill="#3a94d8" /></>],
  ['Teams', <><circle cx="13" cy="4" r="3" fill="#7278d0" /><circle cx="18" cy="6" r="2" fill="#5258b0" /><path d="M8 8h12v5c0 6-12 7-12 0z" fill="#6068c4" /><path d="M0 5h10v10H0z" fill="#444ca8" /><text x="2" y="13" fontSize="9" fontWeight="bold" fill="#fff">T</text><circle cx="15" cy="15" r="5" fill="#d02c48" /><text x="12" y="18" fontSize="9" fontWeight="bold" fill="#fff">8</text></>, true],
  ['Chrome', <><circle cx="10" cy="10" r="9" fill="#e8443a" /><path d="M2 6l6 7 4 2-3 4A9 9 0 012 6z" fill="#34a050" /><path d="M10 6h8a9 9 0 01-9 13l5-7z" fill="#f8c828" /><circle cx="10" cy="10" r="4.5" fill="#fff" /><circle cx="10" cy="10" r="3.5" fill="#4484ec" /></>, true],
  ['CATIA', null, true],
  ['Recorder', <><circle cx="10" cy="10" r="9" fill="none" stroke="#6c93a8" strokeWidth="1.2" /><circle cx="10" cy="10" r="3.5" fill="#7cbcf0" /></>, true],
];

function Watermark() {
  return (
    <div className="absolute left-[10px] -top-[4px] text-white font-bold font-[Lato,'Open_Sans',sans-serif] whitespace-nowrap [text-shadow:1px_1px_1px_#222]">
      <p className="text-[8px] leading-[8px]">RECORDED WITH</p>
      <p className="flex items-center text-[12px] leading-[20px]">
        SCREENCAST
        <svg viewBox="0 0 22 22" className="mx-1 w-[22px] h-[22px]" aria-hidden="true">
          <circle cx="11" cy="11" r="10" fill="#1c2c3c" fillOpacity="0.6" stroke="#5c88a8" strokeWidth="1.5" />
          <circle cx="11" cy="11" r="4" fill="#62a4dc" />
        </svg>
        MATIC
      </p>
    </div>
  );
}

function Taskbar() {
  return (
    <footer className="relative h-[33px] shrink-0 flex items-stretch bg-linear-to-r from-[#213c40] via-[#20373f] via-50% to-[#1e2c42] text-white">
      <button type="button" aria-label="Start menu" className="w-10 flex items-center justify-center">
        <svg viewBox="0 0 14 14" className="w-[14px] h-[14px]"><path d="M0 2l6-1v5H0zM7 1l7-1v6H7zM0 7h6v6l-6-1zM7 7h7v7l-7-1z" fill="#e8e8e8" /></svg>
      </button>
      <label className="w-[286px] flex items-center gap-[6px] pl-[9px] bg-[#333333] border border-[#4c5054] border-b-0">
        <svg viewBox="0 0 14 14" className="w-[14px] h-[14px]"><circle cx="8" cy="6" r="4.5" fill="none" stroke="#ccc" /><path d="M5 9l-4 4" stroke="#ccc" /></svg>
        <input aria-label="Search" placeholder="Type here to search" className="flex-1 min-w-0 bg-transparent text-[12px] leading-4 placeholder:text-[#b4b4b4]" />
      </label>
      <div className="flex">
        {APPS.map(([label, art, running]) => (
          <button key={label} type="button" aria-label={label} className={clsx('relative w-[41px] flex items-center justify-center', label === 'CATIA' && 'bg-[#48585c]')}>
            {art ? <svg viewBox="0 0 20 20" className="w-5 h-5 overflow-visible">{art}</svg> : <CatiaMark className="w-5 h-5 border border-[#ddd]" />}
            {running && <span className="absolute bottom-0 inset-x-1 h-[2px] bg-[#76b4e4]" />}
          </button>
        ))}
      </div>
      <div className="ml-auto flex items-center text-[#f0f0f0]">
        <ChevronUp className="w-[14px] h-[14px]" />
        <svg viewBox="0 0 14 14" className="ml-[6px] w-[14px] h-[14px]"><circle cx="7" cy="7" r="5.5" fill="none" stroke="#eee" strokeWidth="1.3" /><circle cx="7" cy="7" r="2.5" fill="#eee" /></svg>
        <svg viewBox="0 0 14 14" className="ml-[6px] w-[14px] h-[14px]"><path d="M3 4h6v6H3zM9 6l3-2v6L9 8M4 2h5M4 12h5" fill="none" stroke="#eee" strokeWidth="1.2" /></svg>
        <Volume2 className="ml-[6px] w-[14px] h-[14px]" strokeWidth={1.5} />
        <Wifi className="ml-[6px] w-[14px] h-[14px]" strokeWidth={1.5} />
        <svg viewBox="0 0 16 12" className="ml-[6px] w-[15px] h-3"><path d="M4 3h10v6H4z" fill="none" stroke="#eee" /><path d="M5 4h5v4H5zM14 5h1v2h-1zM0 2h4v4H3v4H2V6H0z" fill="#eee" /></svg>
        <span className="ml-2 text-[10px] leading-4">ENG</span>
        <time className="ml-2 text-center text-[10px] leading-[14px]">10:27<br />12-05-2021</time>
        <svg viewBox="0 0 14 14" className="ml-[15px] mr-[19px] w-[14px] h-[14px]"><path d="M1 1h12v10h-2l-3 3v-3H1z" fill="none" stroke="#eee" /><path d="M9 10a3 3 0 014-3v4H9z" fill="#eee" /></svg>
      </div>
      <Watermark />
    </footer>
  );
}

export default function App() {
  return (
    <div className="h-screen flex flex-col overflow-hidden bg-black font-['Open_Sans','Noto_Sans',sans-serif]">
      <div className="flex-1 min-h-0 flex flex-col border-x border-black">
        <TitleBar />
        <MenuBar />
        <EnoviaBar />
        <main className="flex-1 min-h-0 flex">
          <ScrollBar />
          <section aria-label="3D view" className="relative flex-1 min-w-0 overflow-hidden bg-[linear-gradient(#333366,#484876_66%,#6a6a90_78%,#8c8caa_88%,#a8aabc)]">
            <Model />
            <SpecTree />
            <Compass />
            <AxisTriad />
          </section>
          <SideTools />
        </main>
        <BottomBar />
        <StatusBar />
        <Taskbar />
      </div>
    </div>
  );
}
